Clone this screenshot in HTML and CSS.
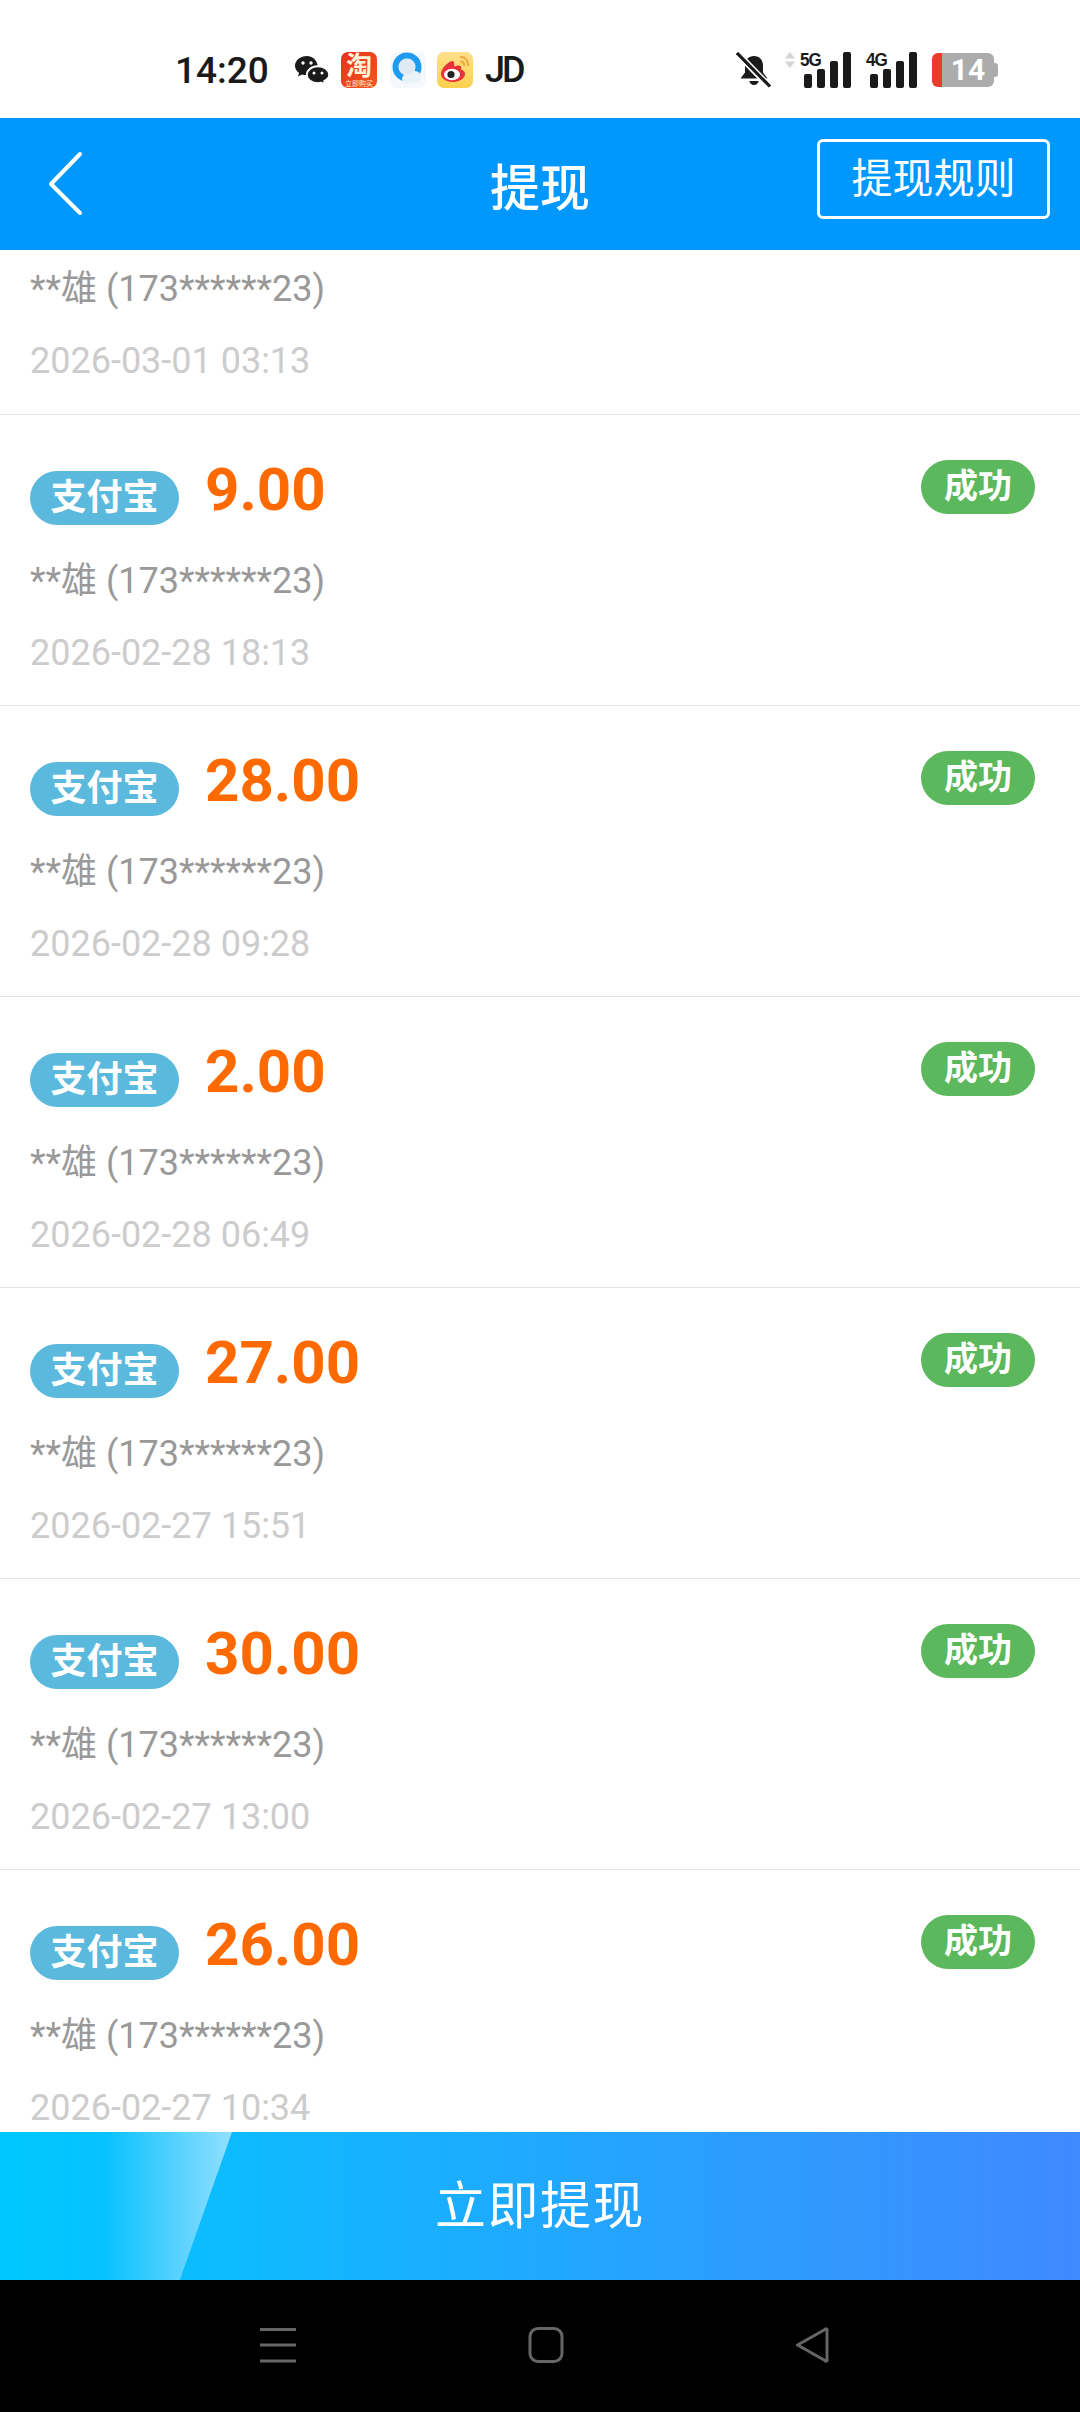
FILE: index.html
```html
<!DOCTYPE html>
<html lang="en">
<head>
    <meta charset="UTF-8">
    <meta name="viewport" content="width=device-width, initial-scale=1.0">
    <title>提现</title>
    <link rel="stylesheet" href="styles.css">
</head>
<body>
    <div class="page">
        <div class="statusbar">
            <div class="status-left">
                <span class="clock">14:20</span>
                <svg class="ic-wechat" width="34" height="28" viewBox="0 0 34 28">
                    <path d="M12 0C5.400 0 0 4.300 0 9.800c0 3 1.600 5.500 4.100 7.300L3 20.600l4-2.100c1.400.4 2.700.6 4 .6 0-5.800 5.400-9.900 11.600-9.800C21.600 3.700 17.300 0 12 0z" fill="#1a1a1a"/>
                    <path d="M23 10.500c-6 0-11 3.700-11 8.300s5 8.200 11 8.200c1.200 0 2.300-.2 3.400-.5l3.500 1.500-.9-3c3-1.500 5-3.900 5-6.200 0-4.600-5-8.300-11-8.300z" fill="#1a1a1a" stroke="#fff" stroke-width="1.500"/>
                    <circle cx="8" cy="7" r="1.700" fill="#fff"/>
                    <circle cx="16" cy="7" r="1.700" fill="#fff"/>
                    <circle cx="19" cy="17" r="1.500" fill="#fff"/>
                    <circle cx="27" cy="17" r="1.500" fill="#fff"/>
                </svg>
                <div class="ic-taobao">
                    <span class="taobao-main">淘</span>
                    <span class="taobao-sub">立即购买</span>
                </div>
                <svg class="ic-qq" width="36" height="36" viewBox="0 0 36 36">
                    <rect width="36" height="36" rx="7" fill="#f5f9fd"/>
                    <circle cx="17" cy="15" r="11.500" fill="none" stroke="#1f9cf0" stroke-width="6"/>
                    <circle cx="17" cy="15" r="8" fill="#dfe9f3"/>
                    <circle cx="25" cy="25" r="6" fill="#eaf2f9"/>
                    <circle cx="17" cy="27" r="5" fill="#eaf2f9"/>
                </svg>
                <svg class="ic-weibo" width="36" height="36" viewBox="0 0 36 36">
                    <defs>
                        <linearGradient id="wb" x1="0" y1="0" x2="0" y2="1">
                            <stop offset="0" stop-color="#ffe08a"/>
                            <stop offset="1" stop-color="#fdd14f"/>
                        </linearGradient>
                    </defs>
                    <rect width="36" height="36" rx="7" fill="url(#wb)"/>
                    <path d="M15 9c-5 1.500-11 8-11 13 0 5 6 8 12 8 7 0 12-4 12-8 0-3-3-4-4-4.500 1-2.500 0-4-3-4-1.500 0-3 1-3.500 1-.5-1 .5-6-2.500-5.500z" fill="#e8323c"/>
                    <ellipse cx="15" cy="22.500" rx="8" ry="5.800" fill="#fff"/>
                    <circle cx="14" cy="22.500" r="3.600" fill="#222"/>
                    <path d="M24 5c4 0 7 3 7 8M24 9.500c2 0 3 1.500 3 3.500" fill="none" stroke="#f2a43a" stroke-width="2" stroke-linecap="round"/>
                </svg>
                <span class="carrier">JD</span>
            </div>
            <div class="status-right">
                <svg class="ic-bell" width="36" height="36" viewBox="0 0 36 36">
                    <path d="M18 4c-5.500 0-9 4-9 9.500v7L4.500 26.500h27L27 20.500v-7C27 8 23.500 4 18 4z" fill="#1a1a1a"/>
                    <path d="M13.500 29h9a4.500 4 0 0 1-9 0z" fill="#1a1a1a"/>
                    <path d="M2 2l32 33" stroke="#fff" stroke-width="6.500"/>
                    <path d="M1 1l33 33.500" stroke="#1a1a1a" stroke-width="3.200"/>
                </svg>
                <svg class="ic-updown" width="10" height="16" viewBox="0 0 10 16">
                    <path d="M5 0l5 6.500H0zM5 16l5-6.500H0z" fill="#d4d4d4"/>
                </svg>
                <div class="signal">
                    <span class="net">5G</span>
                    <div class="bars">
                        <i class="bar bar-1"></i><i class="bar bar-2"></i><i class="bar bar-3"></i><i class="bar bar-4"></i>
                    </div>
                </div>
                <div class="signal">
                    <span class="net">4G</span>
                    <div class="bars">
                        <i class="bar bar-1"></i><i class="bar bar-2"></i><i class="bar bar-3"></i><i class="bar bar-4"></i>
                    </div>
                </div>
                <div class="battery">
                    <div class="battery-low"></div>
                    <div class="battery-body">14</div>
                    <div class="battery-nub"></div>
                </div>
            </div>
        </div>

        <div class="header">
            <svg class="back" width="36" height="66" viewBox="0 0 36 66">
                <path d="M32 3L3 33l29 29" fill="none" stroke="#fff" stroke-width="4" stroke-linecap="round" stroke-linejoin="round"/>
            </svg>
            <div class="title">提现</div>
            <div class="rules">提现规则</div>
        </div>

        <div class="list">
            <div class="row row-cut">
                <div class="name">**雄 (173******23)</div>
                <div class="date">2026-03-01 03:13</div>
            </div>
            <div class="row">
                <div class="row-head">
                    <span class="channel">支付宝</span>
                    <span class="amount">9.00</span>
                    <span class="state">成功</span>
                </div>
                <div class="name">**雄 (173******23)</div>
                <div class="date">2026-02-28 18:13</div>
            </div>
            <div class="row">
                <div class="row-head">
                    <span class="channel">支付宝</span>
                    <span class="amount">28.00</span>
                    <span class="state">成功</span>
                </div>
                <div class="name">**雄 (173******23)</div>
                <div class="date">2026-02-28 09:28</div>
            </div>
            <div class="row">
                <div class="row-head">
                    <span class="channel">支付宝</span>
                    <span class="amount">2.00</span>
                    <span class="state">成功</span>
                </div>
                <div class="name">**雄 (173******23)</div>
                <div class="date">2026-02-28 06:49</div>
            </div>
            <div class="row">
                <div class="row-head">
                    <span class="channel">支付宝</span>
                    <span class="amount">27.00</span>
                    <span class="state">成功</span>
                </div>
                <div class="name">**雄 (173******23)</div>
                <div class="date">2026-02-27 15:51</div>
            </div>
            <div class="row">
                <div class="row-head">
                    <span class="channel">支付宝</span>
                    <span class="amount">30.00</span>
                    <span class="state">成功</span>
                </div>
                <div class="name">**雄 (173******23)</div>
                <div class="date">2026-02-27 13:00</div>
            </div>
            <div class="row">
                <div class="row-head">
                    <span class="channel">支付宝</span>
                    <span class="amount">26.00</span>
                    <span class="state">成功</span>
                </div>
                <div class="name">**雄 (173******23)</div>
                <div class="date">2026-02-27 10:34</div>
            </div>
        </div>

        <div class="withdraw">
            <div class="withdraw-shine"></div>
            <span class="withdraw-text">立即提现</span>
        </div>

        <div class="navbar">
            <svg width="36" height="36" viewBox="0 0 36 36">
                <path d="M0 2.500h36M0 18h36M0 34h36" stroke="#666" stroke-width="3"/>
            </svg>
            <svg class="nav-home" width="36" height="36" viewBox="0 0 36 36">
                <rect x="2" y="1.500" width="32" height="33" rx="8" fill="none" stroke="#666" stroke-width="3"/>
            </svg>
            <svg class="nav-back" width="36" height="36" viewBox="0 0 36 36">
                <path d="M3.500 18L31 2.500a1 1 0 0 1 2 1v29a1 1 0 0 1-2 1z" fill="none" stroke="#666" stroke-width="3" stroke-linejoin="round"/>
            </svg>
        </div>
    </div>
</body>
</html>
```

FILE: styles.css
```css
* {
    box-sizing: border-box;
}

body {
    margin: 0;
    background: #fff;
    font-family: Roboto, "Noto Sans CJK SC", sans-serif;
}

.page {
    width: 1080px;
    height: 2412px;
    display: flex;
    flex-direction: column;
    overflow: hidden;
}

/* Status bar */
.statusbar {
    height: 118px;
    flex: none;
    display: flex;
    justify-content: space-between;
    align-items: center;
    padding: 22px 82px 0 175px;
    color: #1a1a1a;
}

.status-left,
.status-right {
    display: flex;
    align-items: center;
}

.clock {
    font-size: 37px;
    font-weight: 500;
    width: 120px;
}

.ic-wechat {
    margin-right: 12px;
}

.ic-taobao {
    width: 36px;
    height: 36px;
    border-radius: 7px;
    background: linear-gradient(135deg, #e8321e, #f2561e);
    margin-right: 13px;
    display: flex;
    flex-direction: column;
    align-items: center;
    overflow: hidden;
    color: #fff3d8;
}

.taobao-main {
    font-size: 26px;
    font-weight: 700;
    line-height: 28px;
}

.taobao-sub {
    font-size: 7px;
    line-height: 8px;
    white-space: nowrap;
}

.ic-qq {
    margin-right: 11px;
}

.ic-weibo {
    margin-right: 12px;
}

.carrier {
    font-size: 36px;
    font-weight: 500;
    letter-spacing: -3px;
}

.ic-bell {
    margin-right: 13px;
}

.ic-updown {
    margin-right: 5px;
    align-self: flex-start;
}

.signal {
    position: relative;
    width: 51px;
    height: 37px;
    margin-right: 15px;
}

.net {
    position: absolute;
    left: 0;
    top: -2px;
    font-family: "Liberation Sans", sans-serif;
    font-size: 19px;
    font-weight: 700;
    line-height: 20px;
    letter-spacing: -1px;
    transform: scaleX(.9);
    transform-origin: left;
}

.bars {
    height: 36px;
    display: flex;
    justify-content: flex-end;
    align-items: flex-end;
    gap: 5px;
}

.bar {
    width: 8px;
    border-radius: 2px;
    background: #1a1a1a;
}

.bar-1 {
    height: 14px;
}

.bar-2 {
    height: 19px;
}

.bar-3 {
    height: 27px;
}

.bar-4 {
    height: 36px;
}

.battery {
    display: flex;
    align-items: center;
    height: 34px;
}

.battery-low {
    width: 10px;
    height: 34px;
    background: #ee3a2c;
    border-radius: 6px 0 0 6px;
}

.battery-body {
    width: 52px;
    height: 34px;
    background: #acacac;
    border-radius: 0 6px 6px 0;
    color: #fff;
    font-size: 30px;
    font-weight: 700;
    line-height: 34px;
    text-align: center;
}

.battery-nub {
    width: 4px;
    height: 14px;
    background: #acacac;
    border-radius: 0 3px 3px 0;
}

/* Header */
.header {
    position: relative;
    height: 132px;
    flex: none;
    background: #0098ff;
    color: #fff;
    display: flex;
    justify-content: center;
    align-items: center;
}

.back {
    position: absolute;
    left: 48px;
    top: 33px;
}

.title {
    font-size: 50px;
    font-weight: 500;
}

.rules {
    position: absolute;
    left: 817px;
    top: 21px;
    width: 233px;
    height: 80px;
    border: 3px solid #fff;
    border-radius: 6px;
    font-size: 41px;
    line-height: 74px;
    text-align: center;
}

/* Records */
.list {
    flex: 1;
    min-height: 0;
    overflow: hidden;
}

.row {
    padding: 45px 30px 27px;
    border-bottom: 1px solid #e5e5e5;
}

.row-cut {
    padding-top: 14px;
    padding-bottom: 28px;
}

.row-cut .name {
    margin-top: 0;
}

.row-head {
    height: 65px;
    display: flex;
    align-items: flex-start;
}

.channel {
    width: 149px;
    height: 54px;
    margin-top: 11px;
    border-radius: 27px;
    background: #5bb9dd;
    color: #fff;
    font-size: 36px;
    font-weight: 700;
    line-height: 54px;
    text-align: center;
}

.amount {
    margin-left: 26px;
    color: #ff6a00;
    font-size: 60px;
    font-weight: 700;
    line-height: 60px;
}

.state {
    width: 114px;
    height: 54px;
    margin-left: auto;
    margin-right: 15px;
    border-radius: 27px;
    background: #5cb85c;
    color: #fff;
    font-size: 34px;
    font-weight: 700;
    line-height: 52px;
    text-align: center;
}

.name {
    margin-top: 31px;
    color: #999;
    font-size: 36px;
    line-height: 50px;
}

.date {
    margin-top: 22px;
    color: #ccc;
    font-size: 36px;
    line-height: 50px;
}

/* Bottom button */
.withdraw {
    position: relative;
    height: 148px;
    flex: none;
    background: linear-gradient(90deg, #00c8ff, #4089ff);
    display: flex;
    justify-content: center;
    align-items: center;
    padding-bottom: 8px;
}

.withdraw-shine {
    position: absolute;
    left: 0;
    top: 0;
    width: 232px;
    height: 100%;
    clip-path: polygon(0 0, 100% 0, 77.500% 100%, 0 100%);
    background: linear-gradient(90deg, rgba(255, 255, 255, 0) 45%, rgba(255, 255, 255, .55));
}

.withdraw-text {
    position: relative;
    color: #fff;
    font-size: 51px;
    letter-spacing: 1.500px;
}

/* System nav */
.navbar {
    height: 132px;
    flex: none;
    background: #000;
    display: flex;
    align-items: center;
    padding: 0 0 2px 260px;
}

.nav-home {
    margin-left: 232px;
}

.nav-back {
    margin-left: 230px;
}
```
